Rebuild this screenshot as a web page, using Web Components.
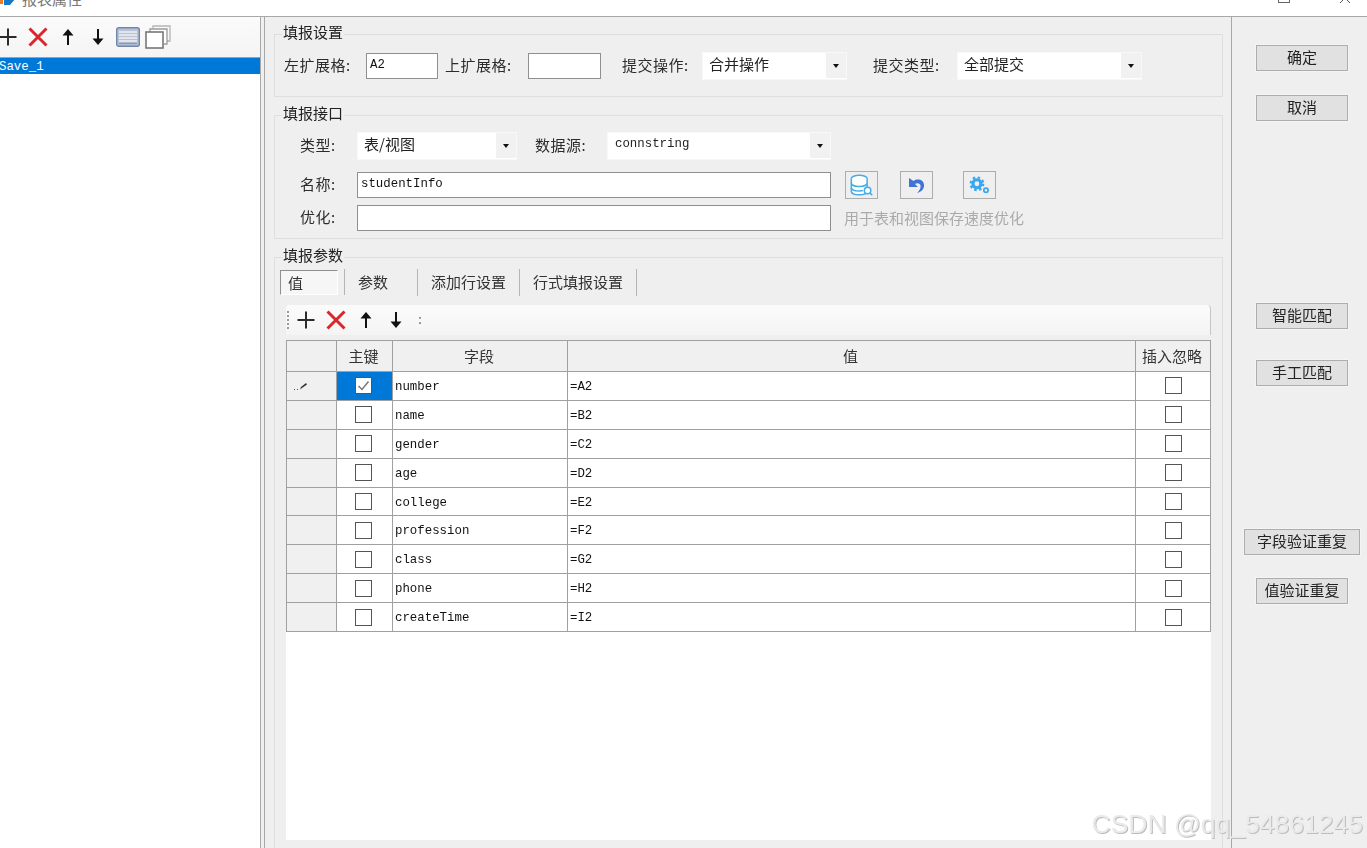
<!DOCTYPE html>
<html lang="zh">
<head>
<meta charset="utf-8">
<title>报表属性</title>
<style>
  html, body { margin: 0; height: 848px; overflow: hidden; background: #efefef; }
  body { font: 15px "Noto Sans CJK SC", sans-serif; color: #222; }
  app-window { display: block; }
</style>
</head>
<body>
<app-window></app-window>

<script>
const ICONS = {
  plus: '<svg width="20" height="20" viewBox="0 0 20 20"><path d="M10 1.500v17M1.500 10h17" stroke="#2b2b2b" stroke-width="2" fill="none"/></svg>',
  del: '<svg width="22" height="20" viewBox="0 0 22 20"><path d="M2.500 1.500 19.500 18.500M19.500 1.500 2.500 18.500" stroke="#d9262c" stroke-width="3" fill="none"/></svg>',
  up: '<svg width="14" height="18" viewBox="0 0 14 18"><path d="M7 17V3" stroke="#111" stroke-width="2"/><path d="M1.500 7.500 7 1l5.500 6.500z" fill="#111"/></svg>',
  down: '<svg width="14" height="18" viewBox="0 0 14 18"><path d="M7 1v14" stroke="#111" stroke-width="2"/><path d="M1.500 10.500 7 17l5.500-6.500z" fill="#111"/></svg>',
  list: '<svg width="24" height="20" viewBox="0 0 24 20"><rect x=".7" y=".7" width="22.600" height="18.600" rx="2" fill="#b9c2d2" stroke="#6f86ad" stroke-width="1.400"/><path d="M3 5h18M3 8h18M3 11h18M3 14h18" stroke="#eef1f6" stroke-width="1.300"/><path d="M3 16.500h18" stroke="#8b97ad" stroke-width="1.300"/></svg>',
  copy: '<svg width="26" height="24" viewBox="0 0 26 24"><path d="M8 3.500V1h17v15h-3" fill="none" stroke="#b5b5b5" stroke-width="1.300"/><path d="M5 7V4h17v15h-3" fill="#fff" stroke="#9a9a9a" stroke-width="1.300"/><rect x="1" y="7" width="17" height="16" fill="#fff" stroke="#777" stroke-width="1.600"/></svg>',
  db: '<svg width="26" height="24" viewBox="0 0 28 24"><g fill="#fff" stroke="#45ace8" stroke-width="1.600"><ellipse cx="11" cy="5" rx="8.500" ry="3.500"/><path d="M2.500 5v14c0 2 3.800 3.500 8.500 3.500S19.500 21 19.500 19V5"/><path d="M2.500 10c0 2 3.800 3.500 8.500 3.500s8.500-1.500 8.500-3.500M2.500 15c0 2 3.800 3.500 8.500 3.500 1.500 0 3-.2 4-.5" fill="none"/></g><circle cx="20" cy="18" r="3.500" fill="#fff" stroke="#45ace8" stroke-width="1.600"/><path d="m22.500 20.500 2.500 2.500" stroke="#45ace8" stroke-width="1.600"/></svg>',
  undo: '<svg width="18" height="20" viewBox="0 0 18 20"><path d="M1 3v9h9L7 9c2-1.500 5-.8 5.500 1.500.5 2.500-1 5-3.500 7.500 4.500-1 7.500-4.500 7-8.500C15.500 5 10 2.800 5.500 6z" fill="#3f74d6"/></svg>',
  gears: '<svg width="21" height="19" viewBox="0 0 24 22"><g fill="none" stroke="#3aa6f0"><circle cx="9" cy="9" r="4.600" stroke-width="3.600"/><circle cx="9" cy="9" r="7.300" stroke-width="2.600" stroke-dasharray="2.900 2.830"/><circle cx="19.500" cy="16.500" r="2.500" stroke-width="2"/></g></svg>'
};

// 分组框
class XGroup extends HTMLElement {
  connectedCallback() {
    this.attachShadow({ mode: 'open' });
    this.shadowRoot.innerHTML = `
      <style>
        :host { display: block; }
        fieldset {
          margin: 0;
          padding: 0;
          height: var(--group-h, auto);
          box-sizing: border-box;
          border: 1px solid #dedede;
          min-width: 0;
        }
        legend {
          margin-left: 7px;
          padding: 0 1px 4px;
          font-size: 15px;
          line-height: 20px;
          color: #222;
        }
        .in { padding: var(--group-pad, 6px 0 0 9px); }
      </style>
      <fieldset>
        <legend>${this.getAttribute('legend')}</legend>
        <div class="in"><slot></slot></div>
      </fieldset>
    `;
  }
}

class XLabel extends HTMLElement {
  connectedCallback() {
    this.attachShadow({ mode: 'open' });
    this.shadowRoot.innerHTML = `
      <style>
        :host { display: block; flex: none; font-size: 15px; letter-spacing: .5px; line-height: 24px; padding-bottom: 2px; white-space: nowrap; color: #2c2c2c; }
      </style>
      <slot></slot>
    `;
  }
}

class XInput extends HTMLElement {
  connectedCallback() {
    this.attachShadow({ mode: 'open' });
    this.shadowRoot.innerHTML = `
      <style>
        :host { display: block; flex: none; height: 26px; box-sizing: border-box; background: #fff;
          border: 1px solid #8f8f8f; padding-left: 3px;
          font: 12.400px/23px "Liberation Mono", monospace; color: #111; }
      </style>
      <slot></slot>
    `;
  }
}

class XCombo extends HTMLElement {
  connectedCallback() {
    this.attachShadow({ mode: 'open' });
    this.shadowRoot.innerHTML = `
      <style>
        :host { display: flex; flex: none; height: 28px; box-sizing: border-box; background: #fff; border: 1px solid #f8f8f8; }
        .text { flex: 1; padding-left: 6px; font-size: 15px; line-height: 22px; white-space: nowrap; color: #222; }
        .mono { font: 12.400px/22px "Liberation Mono", monospace; padding-left: 7px; }
        .arrow { width: 20px; background: #f1f1f1; display: flex; align-items: center; justify-content: center; margin: 0 0 1px; }
        .arrow i { border: 3.500px solid transparent; border-top: 4px solid #111; border-bottom: 0; }
      </style>
      <div class="text ${this.hasAttribute('mono') ? 'mono' : ''}"><slot></slot></div>
      <div class="arrow"><i></i></div>
    `;
  }
}

class XIconButton extends HTMLElement {
  connectedCallback() {
    this.attachShadow({ mode: 'open' });
    this.shadowRoot.innerHTML = `
      <style>
        :host { display: flex; flex: none; width: 33px; height: 28px; box-sizing: border-box; border: 1px solid #adadad;
          align-items: center; justify-content: center; background: #efefef; }
        svg { display: block; }
      </style>
      ${ICONS[this.getAttribute('icon')]}
    `;
  }
}

class XButton extends HTMLElement {
  connectedCallback() {
    this.attachShadow({ mode: 'open' });
    this.shadowRoot.innerHTML = `
      <style>
        :host { display: block; box-sizing: border-box; width: 92px; height: 26px; text-align: center;
          background: #e1e1e1; border: 1px solid #adadad; box-shadow: 0 0 0 1px #f4f4f4;
          font-size: 15px; line-height: 21px; color: #222; white-space: nowrap; }
      </style>
      <slot></slot>
    `;
  }
}

class XToolbar extends HTMLElement {
  connectedCallback() {
    this.attachShadow({ mode: 'open' });
    this.shadowRoot.innerHTML = `
      <style>
        :host { display: flex; align-items: center; box-sizing: border-box;
          background: linear-gradient(#fbfbfb, #f4f4f4); border-top-left-radius: 4px; border-top-right-radius: 4px; }
        span { display: flex; align-items: center; justify-content: center; width: 30px; flex: none; }
        svg { display: block; }
        .handle { width: 0; height: 18px; margin: 0 2px 0 1px; border-left: 2px dotted #999; }
      </style>
      ${this.hasAttribute('handle') ? '<div class="handle"></div>' : ''}
      ${this.getAttribute('items').split(' ').map(n => `<span>${ICONS[n]}</span>`).join('')}
      <slot></slot>
    `;
  }
}

class XTabs extends HTMLElement {
  connectedCallback() {
    this.attachShadow({ mode: 'open' });
    const tabs = [['值', 64, 7], ['参数', 73, 14], ['添加行设置', 102, 14], ['行式填报设置', 117, 14]];
    this.shadowRoot.innerHTML = `
      <style>
        :host { display: flex; height: 27px; font-size: 15px; line-height: 26px; color: #333; }
        .tab { box-sizing: border-box; border-right: 1px solid #b5b5b5; white-space: nowrap; margin-left: 0; }
        .on { border-right: 0; }
        .on b { display: block; font-weight: 400; box-sizing: border-box; width: 58px; height: 25px; margin-top: 1px;
          background: #f6f6f6; border: 1px solid #fff; border-top-color: #8f8f8f; border-left-color: #8f8f8f;
          line-height: 24px; }
        .sep { width: 1px; height: 26px; background: #b5b5b5; }
      </style>
      ${tabs.map(([t, w, p], i) => i === 0
        ? `<div class="tab on" style="width:${w}px"><b style="padding-left:${p}px">${t}</b></div><div class="sep"></div>`
        : `<div class="tab" style="width:${w}px;padding-left:${p - 1}px">${t}</div>`).join('')}
    `;
  }
}

class XCheck extends HTMLElement {
  connectedCallback() {
    this.attachShadow({ mode: 'open' });
    const on = this.hasAttribute('checked');
    this.shadowRoot.innerHTML = `
      <style>
        :host { display: block; width: 17px; height: 17px; box-sizing: border-box; background: #fff; border: 1px solid #555; }
        svg { display: block; }
      </style>
      ${on ? '<svg width="15" height="15" viewBox="0 0 15 15"><path d="m2.500 8 3.500 3.500 6.500-8" fill="none" stroke="#777" stroke-width="1.500"/></svg>' : ''}
    `;
  }
}

// 字段表格
class XDataGrid extends HTMLElement {
  connectedCallback() {
    this.attachShadow({ mode: 'open' });
    const rows = [
      ['number', '=A2'], ['name', '=B2'], ['gender', '=C2'], ['age', '=D2'], ['college', '=E2'],
      ['profession', '=F2'], ['class', '=G2'], ['phone', '=H2'], ['createTime', '=I2']
    ];
    const body = rows.map(([f, v], i) => `
      <div class="c rh">${i === 0 ? '<svg width="16" height="10" viewBox="0 0 16 10"><path d="M2 8.500h1M5 8.500h1" stroke="#555"/><path d="m8 8.500 1-2.500 5-4 1 1.500-5 3.500z" fill="#333"/></svg>' : ''}</div>
      <div class="c mid key ${i === 0 ? 'sel' : ''}"><x-check ${i === 0 ? 'checked' : ''}></x-check></div>
      <div class="c txt">${f}</div>
      <div class="c txt">${v}</div>
      <div class="c mid"><x-check></x-check></div>`).join('');
    this.shadowRoot.innerHTML = `
      <style>
        :host { display: block; background: #fff; height: 500px; }
        .grid { display: grid; grid-template-columns: 50px 56px 175px 568px 75px; grid-template-rows: 31px repeat(9, 28.900px);
          width: 925px; box-sizing: border-box; border: 1px solid #a0a0a0; border-right: 0; border-bottom: 0; }
        .c { box-sizing: border-box; border-right: 1px solid #a0a0a0; border-bottom: 1px solid #a0a0a0; background: #fff; min-width: 0; }
        .h { background: #f0f0f0; text-align: center; padding-right: 2px; font-size: 15px; line-height: 29px; color: #333; white-space: nowrap; }
        .rh { background: #f0f0f0; display: flex; align-items: center; padding-left: 5px; }
        .mid { display: flex; align-items: center; justify-content: center; }
        .key { padding-right: 2px; }
        .sel { background: #0078d7; }
        .txt { font: 12.400px/30px "Liberation Mono", monospace; color: #111; padding-left: 2px; }
      </style>
      <div class="grid">
        <div class="c h"></div>
        <div class="c h">主键</div>
        <div class="c h">字段</div>
        <div class="c h">值</div>
        <div class="c h">插入忽略</div>
        ${body}
      </div>
    `;
  }
}

class XSidebar extends HTMLElement {
  connectedCallback() {
    this.attachShadow({ mode: 'open' });
    this.shadowRoot.innerHTML = `
      <style>
        :host { display: block; width: 261px; flex: none; background: #fff; border-right: 1px solid #a8a8a8; box-sizing: border-box; }
        x-toolbar { height: 40px; margin-left: -7px; padding-right: 0; }
        .list { border-top: 1px solid #a0a0a0; }
        .row { height: 16px; background: #0078d7; color: #fff; font: 12.400px/18px "Liberation Mono", monospace; text-indent: -1px; overflow: hidden; }
      </style>
      <x-toolbar items="plus del up down list copy"></x-toolbar>
      <div class="list"><div class="row">Save_1</div></div>
    `;
  }
}

class XTitlebar extends HTMLElement {
  connectedCallback() {
    this.attachShadow({ mode: 'open' });
    this.shadowRoot.innerHTML = `
      <style>
        :host { display: flex; height: 17px; box-sizing: border-box; background: #fff; border-bottom: 1px solid #a8a8a8; overflow: hidden; }
        .logo { margin: -12px 0 0 -2px; flex: none; }
        .title { margin: -11px 0 0 4px; font-size: 15px; line-height: 20px; color: #777; white-space: nowrap; }
        .ctl { margin-left: auto; display: flex; }
        .max { width: 10px; height: 10px; border: 1px solid #666; margin: -9px 0 0 0; }
        .close { margin: -7px 17px 0 50px; }
      </style>
      <svg class="logo" width="20" height="20" viewBox="0 0 20 20"><path d="M0 6h5v10H0z" fill="#ef7d22"/><path d="M6 0h12v10l-6 7H6z" fill="#1479c9"/></svg>
      <div class="title">报表属性</div>
      <div class="ctl">
        <div class="max"></div>
        <svg class="close" width="10" height="10" viewBox="0 0 10 10"><path d="M0 0l10 10M10 0 0 10" stroke="#555"/></svg>
      </div>
    `;
  }
}

class AppWindow extends HTMLElement {
  connectedCallback() {
    this.attachShadow({ mode: 'open' });
    this.shadowRoot.innerHTML = `
      <style>
        :host { display: block; height: 848px; position: relative; overflow: hidden; filter: blur(.35px); }
        .body { display: flex; height: 831px; }
        .splitter { width: 3px; flex: none; border-right: 1px solid #a8a8a8; }
        .main { width: 967px; flex: none; box-sizing: border-box; padding: 5px 8px 0 9px; border-right: 1px solid #a8a8a8; display: flex; flex-direction: column; overflow: hidden; }
        .row { display: flex; align-items: center; }
        .side { flex: 1; display: flex; flex-direction: column; align-items: center; padding: 28px 0 0 5px; }
        .mark { position: absolute; right: 4px; bottom: 8px; font: 26.500px "Liberation Sans", sans-serif; color: #eaeaea; text-shadow: 1px 1px 0 #bdbdbd; white-space: nowrap; }
        .hint { color: #aaa; font-size: 15px; line-height: 26px; margin-left: 13px; white-space: nowrap; }
        x-group.g2 { --group-pad: 5px 0 0 25px; margin-top: 6px; }
        x-group.g3 { --group-pad: 0 0 0 5px; --group-h: 620px; margin-top: 6px; }
        x-toolbar { height: 30px; width: 925px; margin: 9px 0 0 6px; border-right: 1px solid #c4c4c4; }
        .grip { color: #8a7f66; font: 700 12px/1 "Liberation Sans", sans-serif; margin-left: 7px; }
        x-data-grid { margin: 5px 0 0 6px; width: 925px; }
      </style>
      <x-titlebar></x-titlebar>
      <div class="body">
        <x-sidebar></x-sidebar>
        <div class="splitter"></div>
        <div class="main">
          <x-group legend="填报设置">
            <div class="row" style="height:28px;margin-bottom:16px">
              <x-label style="width:82px">左扩展格:</x-label>
              <x-input style="width:72px">A2</x-input>
              <x-label style="width:83px;margin-left:7px">上扩展格:</x-label>
              <x-input style="width:73px"></x-input>
              <x-label style="width:80px;margin-left:21px">提交操作:</x-label>
              <x-combo style="width:145px">合并操作</x-combo>
              <x-label style="width:84px;margin-left:26px">提交类型:</x-label>
              <x-combo style="width:185px">全部提交</x-combo>
            </div>
          </x-group>
          <x-group class="g2" legend="填报接口">
            <div class="row" style="height:28px">
              <x-label style="width:57px">类型:</x-label>
              <x-combo style="width:160px">表/视图</x-combo>
              <x-label style="width:72px;margin-left:18px">数据源:</x-label>
              <x-combo mono style="width:224px">connstring</x-combo>
            </div>
            <div class="row" style="height:28px;margin-top:11px">
              <x-label style="width:57px">名称:</x-label>
              <x-input style="width:474px">studentInfo</x-input>
              <x-icon-btn icon="db" style="margin-left:14px"></x-icon-btn>
              <x-icon-btn icon="undo" style="margin-left:22px"></x-icon-btn>
              <x-icon-btn icon="gears" style="margin-left:30px"></x-icon-btn>
            </div>
            <div class="row" style="height:26px;margin-top:6px;margin-bottom:7px">
              <x-label style="width:57px">优化:</x-label>
              <x-input style="width:474px"></x-input>
              <div class="hint">用于表和视图保存速度优化</div>
            </div>
          </x-group>
          <x-group class="g3" legend="填报参数">
            <x-tabs></x-tabs>
            <x-toolbar handle items="plus del up down"><span class="grip">:</span></x-toolbar>
            <x-data-grid></x-data-grid>
          </x-group>
        </div>
        <div class="side">
          <x-button>确定</x-button>
          <x-button style="margin-top:24px">取消</x-button>
          <x-button style="margin-top:182px">智能匹配</x-button>
          <x-button style="margin-top:31px">手工匹配</x-button>
          <x-button style="margin-top:143px;width:116px">字段验证重复</x-button>
          <x-button style="margin-top:23px">值验证重复</x-button>
        </div>
      </div>
      <div class="mark">CSDN @qq_54861245</div>
    `;
  }
}

customElements.define('x-group', XGroup);
customElements.define('x-label', XLabel);
customElements.define('x-input', XInput);
customElements.define('x-combo', XCombo);
customElements.define('x-icon-btn', XIconButton);
customElements.define('x-button', XButton);
customElements.define('x-toolbar', XToolbar);
customElements.define('x-tabs', XTabs);
customElements.define('x-check', XCheck);
customElements.define('x-data-grid', XDataGrid);
customElements.define('x-sidebar', XSidebar);
customElements.define('x-titlebar', XTitlebar);
customElements.define('app-window', AppWindow);
</script>
</body>
</html>
